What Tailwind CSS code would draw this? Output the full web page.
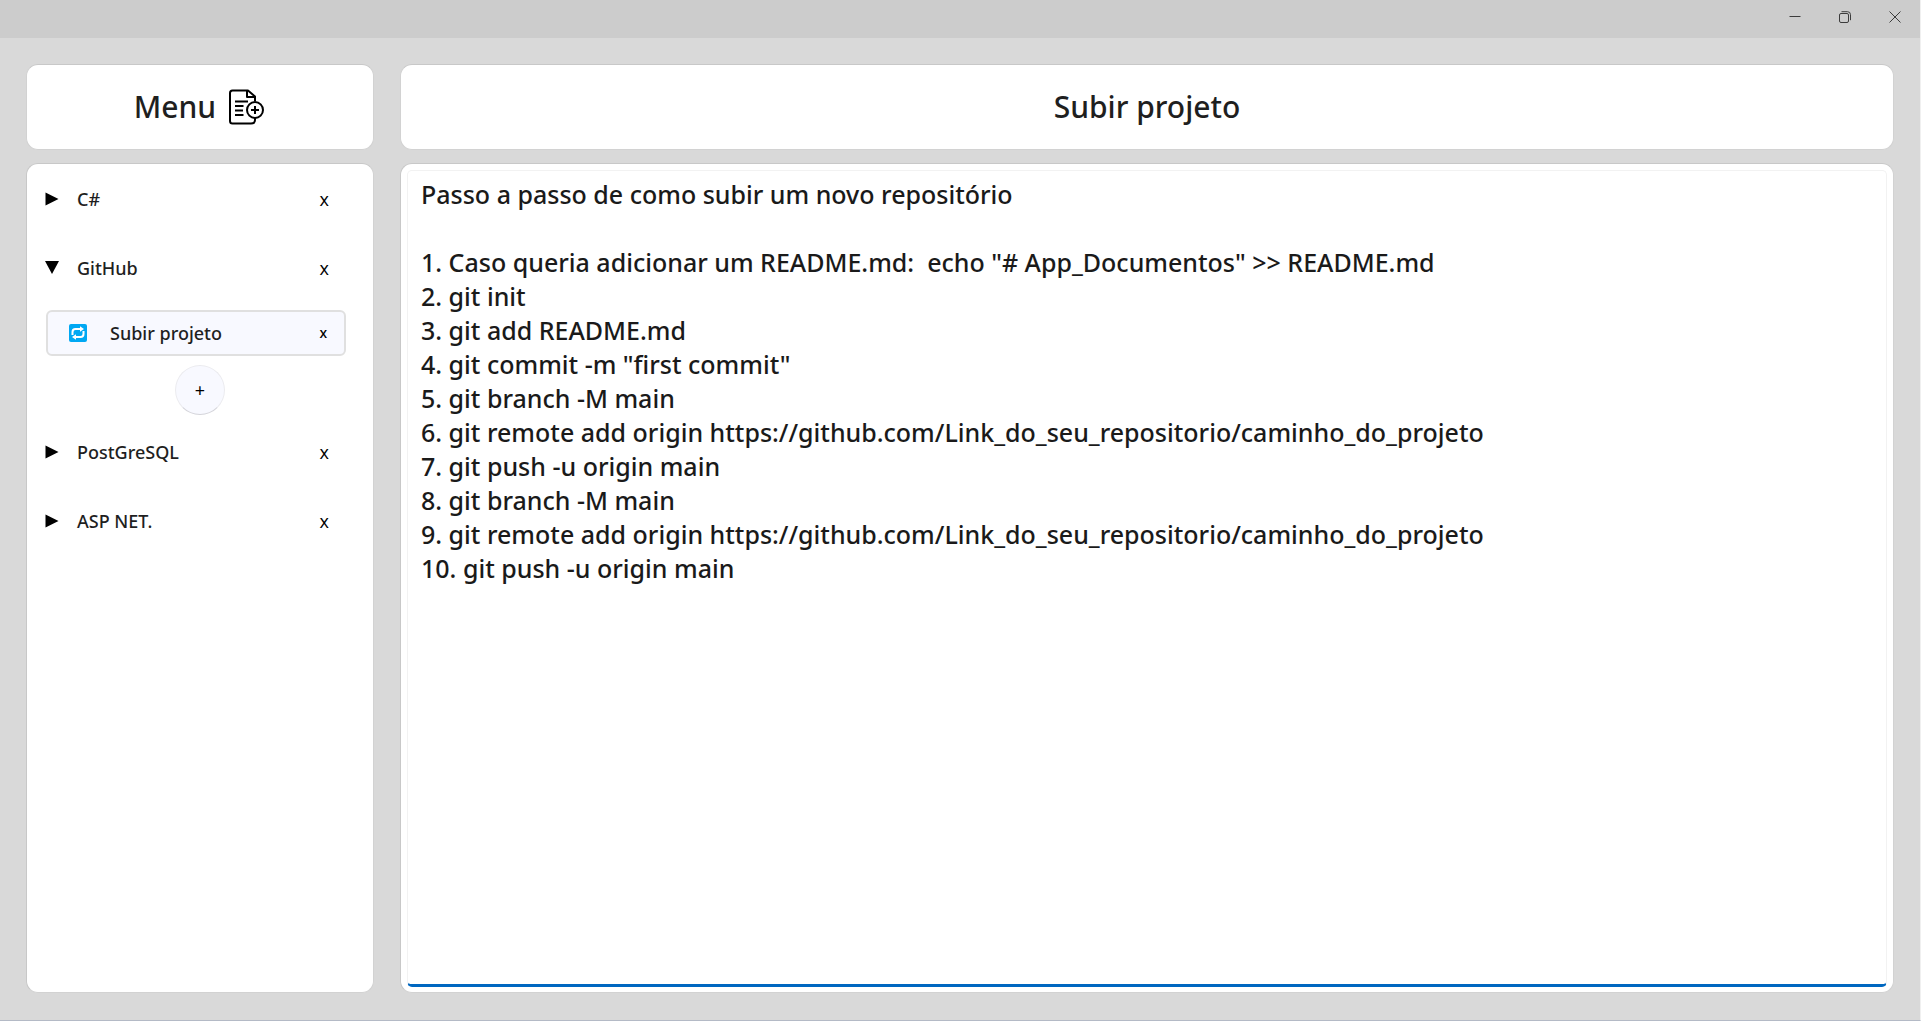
<!DOCTYPE html>
<html lang="pt-BR">
<head>
<meta charset="utf-8">
<title>Documentos</title>
<script src="https://cdn.jsdelivr.net/npm/@tailwindcss/browser@4"></script>
</head>
<body class="flex h-screen flex-col border-r border-b border-r-[#f0f0f0] border-b-[#b4bac6] bg-[#d9d9d9] font-['Noto_Sans',sans-serif] font-medium text-[#1f1f1f]">
  <header class="flex h-[38px] shrink-0 justify-end bg-[#cccccc] pb-[5px] text-[#3c3c3c]">
    <button class="flex w-[50px] items-center justify-center" aria-label="Minimizar">
      <svg class="size-3" viewBox="0 0 12 12" fill="none" stroke="currentColor"><path d="M0.5 5.5h11"/></svg>
    </button>
    <button class="flex w-[50px] items-center justify-center" aria-label="Restaurar">
      <svg class="size-3" viewBox="0 0 12 12" fill="none" stroke="currentColor"><rect x="0.5" y="2.5" width="9" height="9" rx="1.5"/><path d="M2.5 0.7h6a3 3 0 0 1 3 3v5.5"/></svg>
    </button>
    <button class="flex w-[50px] items-center justify-center" aria-label="Fechar">
      <svg class="size-3" viewBox="0 0 12 12" fill="none" stroke="currentColor"><path d="M0.5 0.5l11 11M11.5 0.5l-11 11"/></svg>
    </button>
  </header>

  <div class="flex min-h-0 flex-1 gap-[26px] px-[26px] pt-[26px] pb-[27px]">
    <aside class="flex w-[348px] shrink-0 flex-col gap-[13px]">
      <div class="flex h-[86px] shrink-0 items-center justify-center gap-3 rounded-xl border border-[#d2d2d2] border-t-[#c8c8c8] bg-white pr-[2px]">
        <h2 class="text-[30px] leading-10">Menu</h2>
        <button aria-label="Novo documento">
          <svg class="size-9" viewBox="0 0 36 36" fill="none" stroke="#000" stroke-width="2" stroke-linejoin="round">
            <path d="M27 12V7.500L20 1.500H4.500Q2 1.500 2 4V32Q2 34.500 4.500 34.500H23Q27 34.500 27 31V29"/>
            <path d="M19 1.500V8H27"/>
            <path d="M7 12.500H20M7 17H15.500M7 21.500H15M7 26H15.500"/>
            <circle cx="27" cy="21" r="8"/>
            <path d="M27 17v8M23 21h8"/>
          </svg>
        </button>
      </div>

      <nav class="flex-1 rounded-xl border border-[#d2d2d2] border-t-[#c8c8c8] border-l-[#c8c8c8] bg-white text-[18px] leading-6">
        <div class="flex h-[69px] items-center pr-[44px] pl-[18px]">
          <button class="flex flex-1 items-center gap-[18px]">
            <svg class="size-[14px]" viewBox="0 0 14 14"><path d="M0.500 0.500L13.500 7L0.500 13.500z"/></svg>
            <span>C#</span>
          </button>
          <button class="font-['Open_Sans',sans-serif] font-normal text-black" aria-label="Remover C#">x</button>
        </div>
        <div class="flex h-[69px] items-center pr-[44px] pl-[18px]">
          <button class="flex flex-1 items-center gap-[18px]" aria-expanded="true">
            <svg class="size-[14px]" viewBox="0 0 14 14"><path d="M0 0H14L7 13z"/></svg>
            <span>GitHub</span>
          </button>
          <button class="font-['Open_Sans',sans-serif] font-normal text-black" aria-label="Remover GitHub">x</button>
        </div>
        <div class="flex h-[115px] flex-col items-center gap-[9px] pt-2 pr-[27px] pl-[19px]">
          <div class="flex h-[46px] w-full shrink-0 items-center rounded-md border-2 border-[#e0e0e0] bg-[#f8f9ff] pr-[17px] pl-[21px]">
            <button class="flex flex-1 items-center gap-[23px]">
              <svg class="size-[18px]" viewBox="0 0 18 18"><rect width="18" height="18" rx="2" fill="#00a8f3"/><g fill="none" stroke="#fff" stroke-width="2"><path d="M3.500 11V8Q3.500 5 6.500 5H12"/><path d="M14.500 7V10Q14.500 13 11.500 13H6"/></g><path d="M11 2.200L15 5L11 7.800zM7 10.200L3 13L7 15.800z" fill="#fff"/></svg>
              <span>Subir projeto</span>
            </button>
            <button class="text-[14px] text-black" aria-label="Remover Subir projeto">x</button>
          </div>
          <button class="ml-2 flex size-[50px] shrink-0 items-center justify-center rounded-full border border-[#ebebef] border-b-[#d4d4da] bg-[#f8f9ff] text-[18px] font-normal text-black" aria-label="Adicionar">+</button>
        </div>
        <div class="flex h-[69px] items-center pr-[44px] pl-[18px]">
          <button class="flex flex-1 items-center gap-[18px]">
            <svg class="size-[14px]" viewBox="0 0 14 14"><path d="M0.500 0.500L13.500 7L0.500 13.500z"/></svg>
            <span>PostGreSQL</span>
          </button>
          <button class="font-['Open_Sans',sans-serif] font-normal text-black" aria-label="Remover PostGreSQL">x</button>
        </div>
        <div class="flex h-[69px] items-center pr-[44px] pl-[18px]">
          <button class="flex flex-1 items-center gap-[18px]">
            <svg class="size-[14px]" viewBox="0 0 14 14"><path d="M0.500 0.500L13.500 7L0.500 13.500z"/></svg>
            <span>ASP NET.</span>
          </button>
          <button class="font-['Open_Sans',sans-serif] font-normal text-black" aria-label="Remover ASP NET.">x</button>
        </div>
      </nav>
    </aside>

    <main class="flex min-w-0 flex-1 flex-col gap-[13px]">
      <div class="flex h-[86px] shrink-0 items-center justify-center rounded-xl border border-[#d2d2d2] border-t-[#c8c8c8] bg-white">
        <h1 id="titulo" class="text-[30px] leading-10">Subir projeto</h1>
      </div>
      <div class="flex min-h-0 flex-1 rounded-xl border border-[#d2d2d2] border-t-[#c8c8c8] border-l-[#c8c8c8] bg-white p-[6px] pb-[5px]">
        <textarea aria-labelledby="titulo" spellcheck="false" class="flex-1 resize-none rounded-[5px] border border-b-3 border-[#f2f2f2] border-b-[#0067c0] px-[13px] py-[6px] text-[25px] leading-[34px] text-[#1a1a1a] outline-none">Passo a passo de como subir um novo repositório

1. Caso queria adicionar um README.md:  echo "# App_Documentos" &gt;&gt; README.md
2. git init
3. git add README.md
4. git commit -m "first commit"
5. git branch -M main
6. git remote add origin https://github.com/Link_do_seu_repositorio/caminho_do_projeto
7. git push -u origin main
8. git branch -M main
9. git remote add origin https://github.com/Link_do_seu_repositorio/caminho_do_projeto
10. git push -u origin main</textarea>
      </div>
    </main>
  </div>
</body>
</html>
